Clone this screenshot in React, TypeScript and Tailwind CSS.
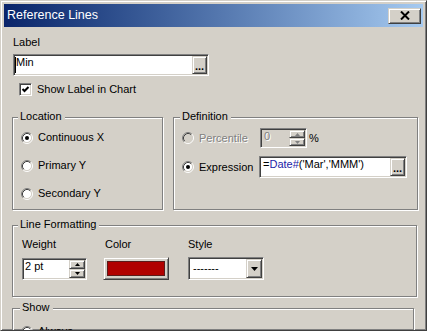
import React from 'react'

const sunken =
  'border border-t-[#808080] border-l-[#808080] border-b-white border-r-white shadow-[inset_1px_1px_0_#404040,inset_-1px_-1px_0_#d4d0c8] p-[1px]'
const raised =
  'bg-[#d4d0c8] border border-t-[#d4d0c8] border-l-[#d4d0c8] border-b-[#404040] border-r-[#404040] shadow-[inset_1px_1px_0_#fff,inset_-1px_-1px_0_#808080]'
const etched = 'relative border border-[#808080] shadow-[inset_1px_1px_0_#fff,1px_1px_0_#fff]'

const Radio = ({ checked = false, disabled = false }: { checked?: boolean; disabled?: boolean }) => (
  <svg width="12" height="12" viewBox="0 0 12 12" className="shrink-0">
    <circle cx="6" cy="6" r="4.5" fill={disabled ? '#d4d0c8' : '#fff'} />
    <path d="M2.11 9.89A5.5 5.5 0 0 1 9.89 2.11" stroke="#808080" fill="none" />
    <path d="M9.89 2.11A5.5 5.5 0 0 1 2.11 9.89" stroke="#fff" fill="none" />
    <path d="M2.82 9.18A4.5 4.5 0 0 1 9.18 2.82" stroke="#404040" fill="none" />
    <path d="M9.18 2.82A4.5 4.5 0 0 1 2.82 9.18" stroke="#d4d0c8" fill="none" />
    {checked && <circle cx="6" cy="6" r="2" fill="#000" />}
  </svg>
)

const SpinArrows = ({ disabled = false }: { disabled?: boolean }) => {
  const fill = disabled ? '#808080' : '#000'
  return (
    <div className="flex flex-col w-[16px] shrink-0">
      <div className={`${raised} flex-1 flex items-center justify-center`}>
        <svg width="5" height="3" viewBox="0 0 5 3">
          <path d="M2.5 0L5 3H0Z" fill={fill} />
        </svg>
      </div>
      <div className={`${raised} flex-1 flex items-center justify-center`}>
        <svg width="5" height="3" viewBox="0 0 5 3">
          <path d="M0 0H5L2.5 3Z" fill={fill} />
        </svg>
      </div>
    </div>
  )
}

const DotsButton = () => (
  <div className={`${raised} w-[15px] shrink-0 flex items-end justify-center pb-[1px] font-bold leading-none`}>
    ...
  </div>
)

const Legend = ({ children, className }: { children: React.ReactNode; className: string }) => (
  <span className={`absolute -top-[8px] bg-[#d4d0c8] pl-[2px] pr-[3px] ${className}`}>{children}</span>
)

export default function App() {
  return (
    <div className="w-[427px] h-[331px] overflow-hidden bg-[#d4d0c8] font-['Liberation_Sans',Arial,sans-serif] text-[11px] leading-[13px] text-black border border-t-[#d4d0c8] border-l-[#d4d0c8] border-r-[#404040] border-b-[#404040] shadow-[inset_1px_1px_0_#fff,inset_-1px_-1px_0_#808080] p-[3px] flex flex-col">
      {/* title bar */}
      <div className="h-[23px] shrink-0 flex items-center justify-between pl-[3px] pr-[2px] bg-linear-to-r from-[#0a246a] to-[#a6caf0]">
        <span className="text-white text-[12.5px] leading-[15px]">Reference Lines</span>
        <div className={`${raised} w-[33px] h-[16px] flex items-center justify-center`}>
          <svg width="10" height="9" viewBox="0 0 10 9">
            <path d="M1 0.5L9 8.5M9 0.5L1 8.5" stroke="#000" strokeWidth="2" />
          </svg>
        </div>
      </div>

      <div className="pl-[8px] flex flex-col shrink-0">
        <div className="mt-[9px] ml-[1px]">Label</div>
        <div className={`${sunken} mt-[5px] ml-[1px] w-[196px] h-[22px] bg-white flex`}>
          <div className="flex-1 flex items-start">
            <span className="w-[1px] h-[16px] bg-black mt-[1px]" />
            <span>Min</span>
          </div>
          <DotsButton />
        </div>
        <div className="mt-[7px] ml-[7px] flex items-center gap-[5px]">
          <div className={`${sunken} w-[13px] h-[13px] bg-white p-0 flex items-center justify-center`}>
            <svg width="9" height="9" viewBox="0 0 9 9">
              <path d="M1.5 4L3.5 6L7.5 2" stroke="#000" strokeWidth="2" fill="none" />
            </svg>
          </div>
          <span>Show Label in Chart</span>
        </div>

        <div className="mt-[21px] flex gap-[10px]">
          {/* Location */}
          <div className={`${etched} w-[151px] h-[93px] pt-[13px] pl-[8px] flex flex-col gap-[15px]`}>
            <Legend className="left-[5px]">Location</Legend>
            <div className="flex items-center gap-[5px] h-[13px]">
              <Radio checked />
              <span>Continuous X</span>
            </div>
            <div className="flex items-center gap-[5px] h-[13px]">
              <Radio />
              <span>Primary Y</span>
            </div>
            <div className="flex items-center gap-[5px] h-[13px]">
              <Radio />
              <span>Secondary Y</span>
            </div>
          </div>

          {/* Definition */}
          <div className={`${etched} w-[245px] h-[93px] pt-[10px] pl-[8px] flex flex-col gap-[8px]`}>
            <Legend className="left-[6px]">Definition</Legend>
            <div className="flex items-center h-[20px]">
              <div className="w-[78px] flex items-center gap-[5px]">
                <Radio disabled />
                <span className="text-[#808080] [text-shadow:1px_1px_0_#fff]">Percentile</span>
              </div>
              <div className={`${sunken} w-[47px] h-[20px] bg-[#d4d0c8] flex`}>
                <span className="flex-1 pl-[2px] text-[#808080] [text-shadow:1px_1px_0_#fff]">0</span>
                <SpinArrows disabled />
              </div>
              <span className="ml-[2px]">%</span>
            </div>
            <div className="flex items-center h-[22px]">
              <div className="w-[77px] flex items-center gap-[5px]">
                <Radio checked />
                <span>Expression</span>
              </div>
              <div className={`${sunken} w-[148px] h-[22px] bg-white flex`}>
                <span className="flex-1 pl-[2px] whitespace-nowrap">
                  =<span className="text-[#1c1ca8]">Date#</span>('Mar','MMM')
                </span>
                <DotsButton />
              </div>
            </div>
          </div>
        </div>

        {/* Line Formatting */}
        <div className={`${etched} mt-[15px] w-[405px] h-[72px] shrink-0 pt-[12px] pl-[9px] flex items-start gap-[16px]`}>
          <Legend className="left-[5px]">Line Formatting</Legend>
          <div className="flex flex-col">
            <span>Weight</span>
            <div className={`${sunken} mt-[7px] w-[65px] h-[22px] bg-white flex`}>
              <span className="flex-1 pl-[1px]">2 pt</span>
              <SpinArrows />
            </div>
          </div>
          <div className="flex flex-col">
            <span className="ml-[2px]">Color</span>
            <div className={`${raised} mt-[6px] w-[66px] h-[23px] p-[3px] flex`}>
              <div className="flex-1 bg-[#b00000] border border-[#5a1a1a]" />
            </div>
          </div>
          <div className="flex flex-col ml-[3px]">
            <span>Style</span>
            <div className={`${sunken} mt-[6px] w-[76px] h-[23px] bg-white flex`}>
              <span className="flex-1 pl-[3px] flex items-center">-------</span>
              <div className={`${raised} w-[16px] flex items-center justify-center`}>
                <svg width="7" height="4" viewBox="0 0 7 4">
                  <path d="M0 0H7L3.5 4Z" fill="#000" />
                </svg>
              </div>
            </div>
          </div>
        </div>

        {/* Show */}
        <div className={`${etched} mt-[11px] w-[402px] h-[60px] shrink-0 pt-[16px] pl-[8px] flex flex-col`}>
          <Legend className="left-[7px]">Show</Legend>
          <div className="flex items-center gap-[5px] h-[13px]">
            <Radio checked />
            <span>Always</span>
          </div>
        </div>
      </div>
    </div>
  )
}
